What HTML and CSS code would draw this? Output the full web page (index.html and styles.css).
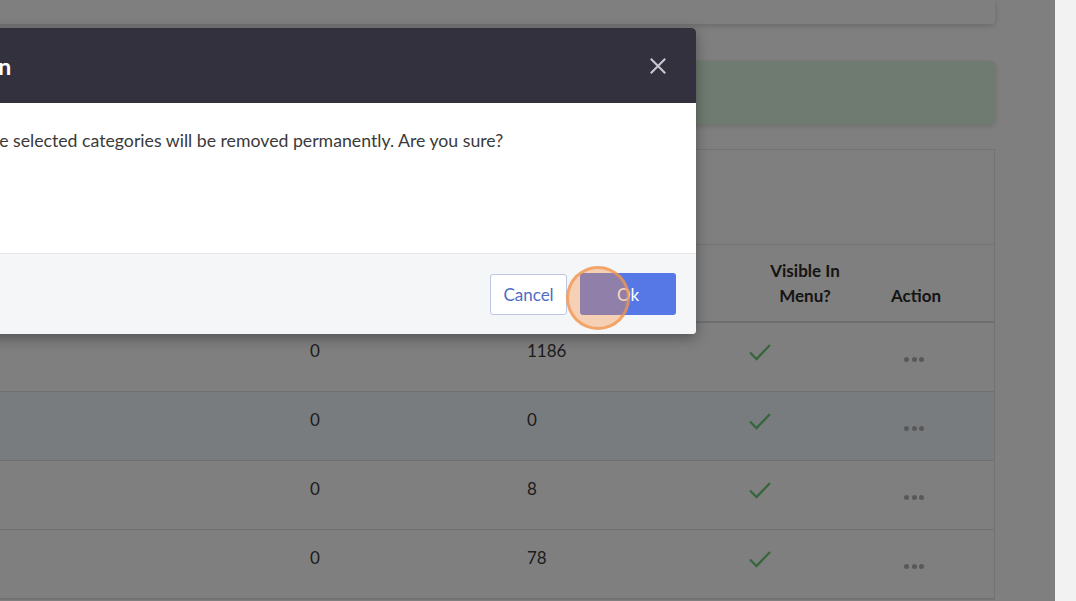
FILE: index.html
```html
<!DOCTYPE html>
<html lang="en">
<head>
<meta charset="utf-8">
<title>Categories</title>
<link rel="stylesheet" href="styles.css">
</head>
<body>
<div class="app">
  <main class="page">
    <div class="top-card"></div>
    <div class="alert"></div>
    <section class="table-card">
      <div class="toolbar"></div>
      <div class="row head">
        <div class="cell"></div>
        <div class="cell"></div>
        <div class="cell"></div>
        <div class="cell center">Visible In<br>Menu?</div>
        <div class="cell center action-h">Action</div>
      </div>
      <div class="row">
        <div class="cell"></div>
        <div class="cell">0</div>
        <div class="cell">1186</div>
        <div class="cell"><svg class="check" viewBox="0 0 24 18"><path d="M2 9.5 L8.5 16 L22 2" /></svg></div>
        <div class="cell dots-cell"><span class="dots"><i></i><i></i><i></i></span></div>
      </div>
      <div class="row selected">
        <div class="cell"></div>
        <div class="cell">0</div>
        <div class="cell">0</div>
        <div class="cell"><svg class="check" viewBox="0 0 24 18"><path d="M2 9.5 L8.5 16 L22 2" /></svg></div>
        <div class="cell dots-cell"><span class="dots"><i></i><i></i><i></i></span></div>
      </div>
      <div class="row">
        <div class="cell"></div>
        <div class="cell">0</div>
        <div class="cell">8</div>
        <div class="cell"><svg class="check" viewBox="0 0 24 18"><path d="M2 9.5 L8.5 16 L22 2" /></svg></div>
        <div class="cell dots-cell"><span class="dots"><i></i><i></i><i></i></span></div>
      </div>
      <div class="row">
        <div class="cell"></div>
        <div class="cell">0</div>
        <div class="cell">78</div>
        <div class="cell"><svg class="check" viewBox="0 0 24 18"><path d="M2 9.5 L8.5 16 L22 2" /></svg></div>
        <div class="cell dots-cell"><span class="dots"><i></i><i></i><i></i></span></div>
      </div>
    </section>
    <div class="backdrop"></div>
    <div class="modal">
      <div class="modal-header">
        <h2 class="modal-title">Confirmation</h2>
        <button class="close" aria-label="Close"><svg viewBox="0 0 20 20"><path d="M2 2 L18 18 M18 2 L2 18"/></svg></button>
      </div>
      <div class="modal-body">The selected categories will be removed permanently. Are you sure?</div>
      <div class="modal-footer">
        <button class="btn btn-cancel">Cancel</button>
        <button class="btn btn-ok">Ok</button>
      </div>
    </div>
    <div class="click-mark"></div>
  </main>
  <div class="scroll-strip"></div>
</div>
</body>
</html>
```
FILE: styles.css
```css
* { box-sizing: border-box; }
html, body { margin: 0; padding: 0; height: 100%; overflow: hidden; }
body { font-family: Lato, "Noto Sans", sans-serif; color: #333; background: #fff; }
.app { display: flex; height: 601px; }
.page { position: relative; flex: 1; background: #ffffff; padding: 0 60px 0 0; overflow: hidden; }
.scroll-strip { width: 21px; background: #f2f2f2; }

.top-card { height: 24px; margin-left: -20px; background: #fff; border-radius: 0 0 4px 4px; box-shadow: 0 2px 6px rgba(0,0,0,0.18); }
.alert { margin-top: 37px; margin-left: -20px; height: 63px; background: #def6e0; border-radius: 4px; box-shadow: 0 2px 6px rgba(0,0,0,0.15); }
.table-card { margin-top: 25px; margin-left: -20px; border: 1px solid #e6e6e6; background: #fff; }
.toolbar { height: 95px; border-bottom: 1px solid #e6e6e6; }

.row { display: grid; grid-template-columns: 319px 217px 221px 134px 122px; height: 69px; border-bottom: 1px solid #e0e0e0; font-size: 17px; color: #3a3a3a; }
.row.head { height: 78px; border-bottom: 2px solid #dcdcdc; font-weight: 700; color: #2a2a2a; align-items: end; line-height: 25px; padding-bottom: 13px; }
.row.selected { background: #f2f8ff; }
.cell { padding: 17px 10px 0; }
.row.head .cell { padding: 0 10px; }
.center { text-align: center; }
.action-h { padding-right: 44px !important; }
.check { width: 24px; height: 18px; margin-top: 3px; fill: none; stroke: #6ccc7c; stroke-width: 2.3; display: block; }
.dots-cell { display: flex; align-items: center; padding: 0 0 0 32px; }
.dots { display: flex; gap: 2.5px; margin-top: 4px; }
.dots i { width: 5px; height: 5px; border-radius: 50%; background: #b0b0b0; display: block; }

.backdrop { position: absolute; inset: 0; background: rgba(0,0,0,0.5); }

.modal { position: absolute; top: 28px; left: -304px; width: 1000px; background: #fff; border-radius: 4px; box-shadow: 0 4px 14px rgba(0,0,0,0.35); overflow: hidden; }
.modal-header { height: 75px; background: #33313d; display: flex; align-items: center; justify-content: space-between; padding: 0 27px 0 180px; }
.modal-title { margin: 0; color: #fff; font-size: 23px; font-weight: 700; }
.close { background: none; border: 0; padding: 0; width: 20px; height: 20px; cursor: pointer; }
.close svg { width: 18px; height: 18px; display: block; fill: none; stroke: #c9c8d0; stroke-width: 2.3; }
.modal-body { height: 150px; padding: 26px 24px 0 283px; font-size: 17.7px; line-height: 24px; color: #3a3a3a; }
.modal-footer { height: 81px; background: #f5f6f8; border-top: 1px solid #e4e6ea; display: flex; align-items: center; justify-content: flex-end; gap: 13px; padding: 0 20px 0 0; }
.btn { font-family: inherit; font-size: 17px; border-radius: 3px; cursor: pointer; }
.btn-cancel { width: 77px; height: 41px; background: #fff; border: 1px solid #bcc7e6; color: #4e6cc4; }
.btn-ok { width: 96px; height: 42px; background: #5578e6; border: 0; color: #fff; }

.click-mark { position: absolute; left: 566px; top: 266px; width: 64px; height: 64px; border-radius: 50%; background: rgba(250,140,60,0.36); border: 3px solid rgba(240,150,80,0.75); }
```
